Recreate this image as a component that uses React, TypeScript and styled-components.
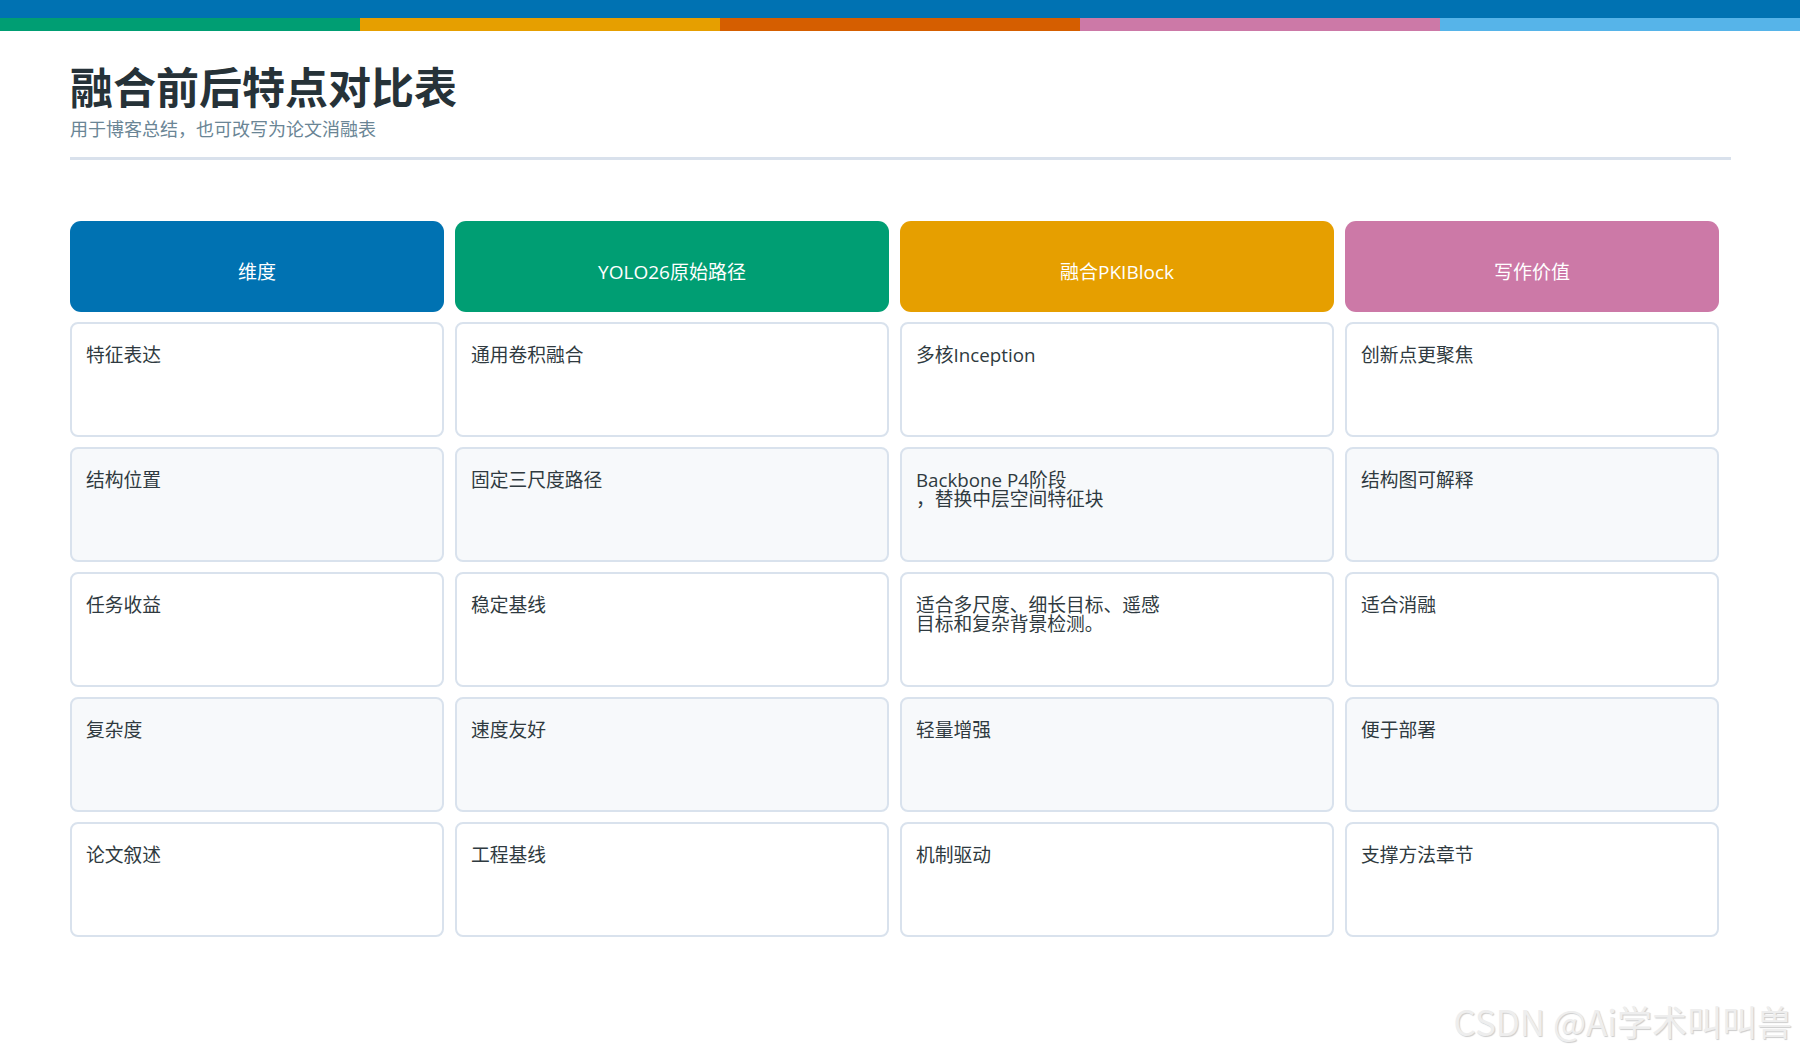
import React from "react";
import styled, { createGlobalStyle } from "styled-components";

const GlobalStyle = createGlobalStyle`
  html, body {
    margin: 0;
    padding: 0;
    background: #ffffff;
  }
  body {
    font-family: "Open Sans", "Noto Sans CJK SC", sans-serif;
  }
`;

const palette = {
  blue: "#0072b2",
  green: "#009e73",
  orange: "#e69f00",
  vermillion: "#d55e00",
  pink: "#cc79a7",
  sky: "#56b4e9",
};

const Page = styled.div`
  position: relative;
  min-height: 1050px;
`;

const TopBar = styled.div`
  height: 18px;
  background: ${palette.blue};
`;

const Strip = styled.div`
  display: grid;
  grid-template-columns: repeat(5, 1fr);
  height: 13px;
`;

const StripPart = styled.div<{ $color: string }>`
  background: ${(p) => p.$color};
`;

const Content = styled.div`
  padding: 32px 69px 0 70px;
`;

const Title = styled.h1`
  margin: 0;
  font-size: 43px;
  line-height: 50px;
  font-weight: 700;
  color: #263238;
  font-family: "Open Sans", "Noto Sans CJK SC", sans-serif;
`;

const Subtitle = styled.div`
  margin-top: 5px;
  font-size: 18px;
  line-height: 22px;
  color: #6a8595;
  font-family: "Open Sans", "Noto Sans CJK SC", sans-serif;
`;

const Divider = styled.div`
  margin-top: 17px;
  height: 3px;
  background: #d9e1ec;
`;

const Table = styled.div`
  margin-top: 61px;
  display: grid;
  grid-template-columns: 374px 434px 434px 374px;
  grid-auto-rows: 115px;
  grid-template-rows: 91px;
  column-gap: 11px;
  row-gap: 10px;
`;

const HeadCell = styled.div<{ $color: string }>`
  display: flex;
  align-items: center;
  justify-content: center;
  padding-top: 9px;
  box-sizing: border-box;
  border-radius: 11px;
  background: ${(p) => p.$color};
  color: #ffffff;
  font-size: 19px;
`;

const Cell = styled.div<{ $shaded: boolean }>`
  box-sizing: border-box;
  padding: 21px 14px 0 14px;
  border: 2px solid #d9e2ed;
  border-radius: 8px;
  background: ${(p) => (p.$shaded ? "#f7f9fb" : "#ffffff")};
  color: #2f3a40;
  font-size: 18.75px;
  line-height: 19px;
`;

const Watermark = styled.div`
  position: absolute;
  right: 8px;
  bottom: 12px;
  font-family: "Noto Sans CJK SC", sans-serif;
  font-size: 35px;
  line-height: 1;
  color: #eeeeee;
  text-shadow: 1px 1px 1px rgba(0, 0, 0, 0.2), -1px -1px 0 rgba(255, 255, 255, 0.9);
`;

const headers = [
  { label: "维度", color: palette.blue },
  { label: "YOLO26原始路径", color: palette.green },
  { label: "融合PKIBlock", color: palette.orange },
  { label: "写作价值", color: palette.pink },
];

const rows: string[][] = [
  ["特征表达", "通用卷积融合", "多核Inception", "创新点更聚焦"],
  ["结构位置", "固定三尺度路径", "Backbone P4阶段\n，替换中层空间特征块", "结构图可解释"],
  ["任务收益", "稳定基线", "适合多尺度、细长目标、遥感\n目标和复杂背景检测。", "适合消融"],
  ["复杂度", "速度友好", "轻量增强", "便于部署"],
  ["论文叙述", "工程基线", "机制驱动", "支撑方法章节"],
];

const renderText = (text: string) =>
  text.split("\n").map((line, i) => (
    <React.Fragment key={i}>
      {i > 0 && <br />}
      {line}
    </React.Fragment>
  ));

const App = () => {
  return (
    <>
      <GlobalStyle />
      <Page>
        <TopBar />
        <Strip>
          <StripPart $color={palette.green} />
          <StripPart $color={palette.orange} />
          <StripPart $color={palette.vermillion} />
          <StripPart $color={palette.pink} />
          <StripPart $color={palette.sky} />
        </Strip>

        <Content>
          <Title>融合前后特点对比表</Title>
          <Subtitle>用于博客总结，也可改写为论文消融表</Subtitle>
          <Divider />

          <Table>
            {headers.map((h) => (
              <HeadCell key={h.label} $color={h.color}>
                {h.label}
              </HeadCell>
            ))}
            {rows.map((row, r) =>
              row.map((text, c) => (
                <Cell key={`${r}-${c}`} $shaded={r % 2 === 1}>
                  {renderText(text)}
                </Cell>
              ))
            )}
          </Table>
        </Content>

        <Watermark>CSDN @Ai学术叫叫兽</Watermark>
      </Page>
    </>
  );
};

export default App;
